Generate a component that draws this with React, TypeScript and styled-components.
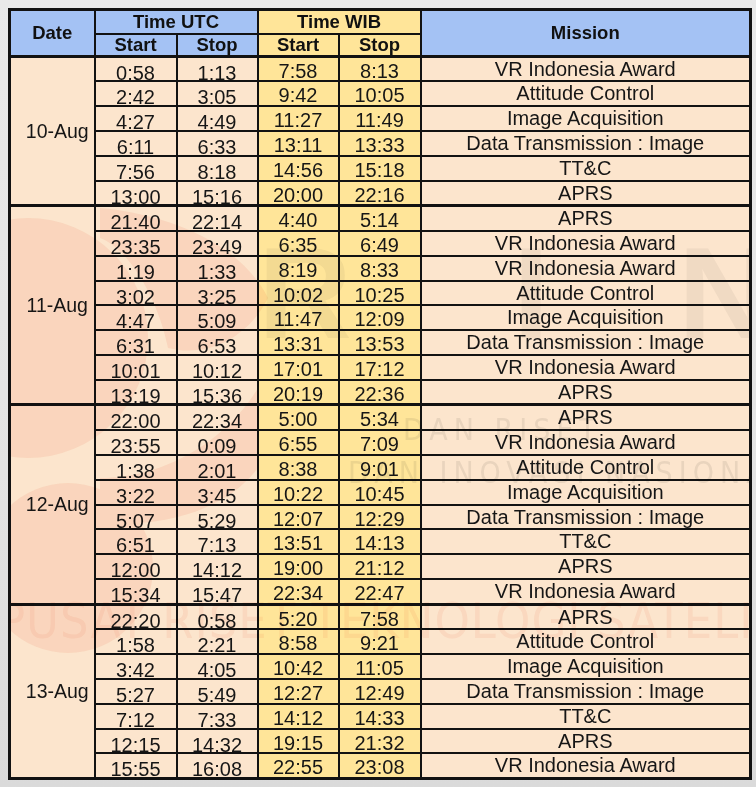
import React from 'react';
import styled, { createGlobalStyle } from 'styled-components';

type Pass = {
  utcStart: string;
  utcStop: string;
  wibStart: string;
  wibStop: string;
  mission: string;
};

type DayGroup = {
  date: string;
  passes: Array<Pass>;
};

const p = (utcStart: string, utcStop: string, wibStart: string, wibStop: string, mission: string): Pass => ({
  utcStart,
  utcStop,
  wibStart,
  wibStop,
  mission,
});

const schedule: Array<DayGroup> = [
  {
    date: '10-Aug',
    passes: [
      p('0:58', '1:13', '7:58', '8:13', 'VR Indonesia Award'),
      p('2:42', '3:05', '9:42', '10:05', 'Attitude Control'),
      p('4:27', '4:49', '11:27', '11:49', 'Image Acquisition'),
      p('6:11', '6:33', '13:11', '13:33', 'Data Transmission : Image'),
      p('7:56', '8:18', '14:56', '15:18', 'TT&C'),
      p('13:00', '15:16', '20:00', '22:16', 'APRS'),
    ],
  },
  {
    date: '11-Aug',
    passes: [
      p('21:40', '22:14', '4:40', '5:14', 'APRS'),
      p('23:35', '23:49', '6:35', '6:49', 'VR Indonesia Award'),
      p('1:19', '1:33', '8:19', '8:33', 'VR Indonesia Award'),
      p('3:02', '3:25', '10:02', '10:25', 'Attitude Control'),
      p('4:47', '5:09', '11:47', '12:09', 'Image Acquisition'),
      p('6:31', '6:53', '13:31', '13:53', 'Data Transmission : Image'),
      p('10:01', '10:12', '17:01', '17:12', 'VR Indonesia Award'),
      p('13:19', '15:36', '20:19', '22:36', 'APRS'),
    ],
  },
  {
    date: '12-Aug',
    passes: [
      p('22:00', '22:34', '5:00', '5:34', 'APRS'),
      p('23:55', '0:09', '6:55', '7:09', 'VR Indonesia Award'),
      p('1:38', '2:01', '8:38', '9:01', 'Attitude Control'),
      p('3:22', '3:45', '10:22', '10:45', 'Image Acquisition'),
      p('5:07', '5:29', '12:07', '12:29', 'Data Transmission : Image'),
      p('6:51', '7:13', '13:51', '14:13', 'TT&C'),
      p('12:00', '14:12', '19:00', '21:12', 'APRS'),
      p('15:34', '15:47', '22:34', '22:47', 'VR Indonesia Award'),
    ],
  },
  {
    date: '13-Aug',
    passes: [
      p('22:20', '0:58', '5:20', '7:58', 'APRS'),
      p('1:58', '2:21', '8:58', '9:21', 'Attitude Control'),
      p('3:42', '4:05', '10:42', '11:05', 'Image Acquisition'),
      p('5:27', '5:49', '12:27', '12:49', 'Data Transmission : Image'),
      p('7:12', '7:33', '14:12', '14:33', 'TT&C'),
      p('12:15', '14:32', '19:15', '21:32', 'APRS'),
      p('15:55', '16:08', '22:55', '23:08', 'VR Indonesia Award'),
    ],
  },
];

const BLUE = '#a4c2f4';
const YELLOW = '#ffe599';
const PEACH = '#fce5cd';
const LINE = '#121212';

const GlobalStyle = createGlobalStyle`
  html, body {
    margin: 0;
    padding: 0;
  }
  body {
    background: linear-gradient(180deg, #e9e9e9 0%, #e3e3e3 60%, #dadada 100%);
    font-family: "Liberation Sans", Arial, sans-serif;
    color: #161616;
  }
`;

const Page = styled.main`
  width: 756px;
  height: 787px;
  padding: 8px;
  box-sizing: border-box;
  overflow: hidden;
`;

const Frame = styled.div`
  position: relative;
  width: 741px;
`;

const Table = styled.table`
  width: 741px;
  table-layout: fixed;
  border-collapse: collapse;
  border: 3px solid ${LINE};
`;

const HeadRow = styled.tr<{ $h: number }>`
  height: ${({ $h }) => $h}px;
`;

const HeadCell = styled.th<{ $tone: 'blue' | 'yellow'; $thickBottom?: boolean }>`
  background: ${({ $tone }) => ($tone === 'blue' ? BLUE : YELLOW)};
  border: 2px solid ${LINE};
  border-bottom-width: ${({ $thickBottom }) => ($thickBottom ? 3 : 2)}px;
  padding: 0;
  font-size: 18.5px;
  font-weight: 700;
  line-height: 18px;
  text-align: center;
  vertical-align: middle;
  color: #111;
`;

const BodyRow = styled.tr<{ $groupEnd: boolean }>`
  height: 24.9px;

  td {
    border-bottom-width: ${({ $groupEnd }) => ($groupEnd ? 3 : 2)}px;
  }
`;

const DateCell = styled.td`
  background: ${PEACH};
  border: 2px solid ${LINE};
  border-bottom-width: 3px !important;
  padding: 0 0 0 10px;
  font-size: 19.5px;
  text-align: center;
  vertical-align: middle;
`;

const TimeCell = styled.td<{ $zone: 'utc' | 'wib'; $drop: number }>`
  background: ${({ $zone }) => ($zone === 'utc' ? PEACH : YELLOW)};
  border: 2px solid ${LINE};
  padding: ${({ $drop }) => $drop}px 0 0;
  font-size: 20px;
  line-height: 14px;
  text-align: center;
  vertical-align: top;
  white-space: nowrap;
`;

const MissionCell = styled.td`
  background: ${PEACH};
  border: 2px solid ${LINE};
  padding: 4px 0 0;
  font-size: 20px;
  line-height: 14px;
  text-align: center;
  vertical-align: top;
  white-space: nowrap;
`;

const Watermark = styled.svg`
  position: absolute;
  left: 0;
  top: 0;
  width: 741px;
  height: 772px;
  pointer-events: none;
  mix-blend-mode: multiply;
`;

const ScheduleTable = () => (
  <Table>
    <colgroup>
      <col style={{ width: 85 }} />
      <col style={{ width: 82 }} />
      <col style={{ width: 81 }} />
      <col style={{ width: 81 }} />
      <col style={{ width: 82 }} />
      <col style={{ width: 330 }} />
    </colgroup>
    <thead>
      <HeadRow $h={24}>
        <HeadCell $tone="blue" rowSpan={2} $thickBottom>
          Date
        </HeadCell>
        <HeadCell $tone="blue" colSpan={2}>
          Time UTC
        </HeadCell>
        <HeadCell $tone="yellow" colSpan={2}>
          Time WIB
        </HeadCell>
        <HeadCell $tone="blue" rowSpan={2} $thickBottom>
          Mission
        </HeadCell>
      </HeadRow>
      <HeadRow $h={23}>
        <HeadCell $tone="blue" $thickBottom>Start</HeadCell>
        <HeadCell $tone="blue" $thickBottom>Stop</HeadCell>
        <HeadCell $tone="yellow" $thickBottom>Start</HeadCell>
        <HeadCell $tone="yellow" $thickBottom>Stop</HeadCell>
      </HeadRow>
    </thead>
    <tbody>
      {schedule.map((group) =>
        group.passes.map((pass, i) => (
          <BodyRow key={group.date + i} $groupEnd={i === group.passes.length - 1}>
            {i === 0 && <DateCell rowSpan={group.passes.length}>{group.date}</DateCell>}
            <TimeCell $zone="utc" $drop={8}>{pass.utcStart}</TimeCell>
            <TimeCell $zone="utc" $drop={8}>{pass.utcStop}</TimeCell>
            <TimeCell $zone="wib" $drop={6}>{pass.wibStart}</TimeCell>
            <TimeCell $zone="wib" $drop={6}>{pass.wibStop}</TimeCell>
            <MissionCell>{pass.mission}</MissionCell>
          </BodyRow>
        )),
      )}
    </tbody>
  </Table>
);

// faint agency watermark printed behind the photographed sheet
const AgencyWatermark = () => (
  <Watermark viewBox="0 0 741 772">
    <g fill="#ec8a70" opacity="0.14">
      <circle cx="20" cy="330" r="120" />
      <circle cx="60" cy="560" r="85" />
      <path d="M92 200 C 150 205, 230 230, 260 290 C 240 330, 200 350, 160 340 C 150 290, 120 240, 92 230 Z" />
      <path d="M92 470 C 160 470, 220 430, 250 380 L 250 460 C 220 500, 160 520, 92 515 Z" />
    </g>
    <g fill="#8a8a8a" opacity="0.1" fontFamily="Liberation Sans, Arial, sans-serif" fontWeight="700">
      <text x="250" y="330" fontSize="130">R</text>
      <text x="505" y="330" fontSize="130">I</text>
      <text x="670" y="330" fontSize="130">N</text>
    </g>
    <g fill="#8a8a8a" opacity="0.16" fontFamily="DejaVu Sans Condensed, Liberation Sans, sans-serif">
      <text x="395" y="432" fontSize="30" letterSpacing="6">DAN RISET</text>
      <text x="340" y="475" fontSize="30" letterSpacing="6">DAN INOVASI NASIONAL</text>
    </g>
    <text
      x="-10"
      y="630"
      fill="#ec8a70"
      opacity="0.12"
      fontSize="50"
      letterSpacing="1"
      fontFamily="DejaVu Sans Condensed, Liberation Sans Narrow, sans-serif"
    >
      PUSAT RISET TEKNOLOGI SATELIT
    </text>
  </Watermark>
);

const App = () => (
  <>
    <GlobalStyle />
    <Page>
      <Frame>
        <ScheduleTable />
        <AgencyWatermark />
      </Frame>
    </Page>
  </>
);

export default App;
